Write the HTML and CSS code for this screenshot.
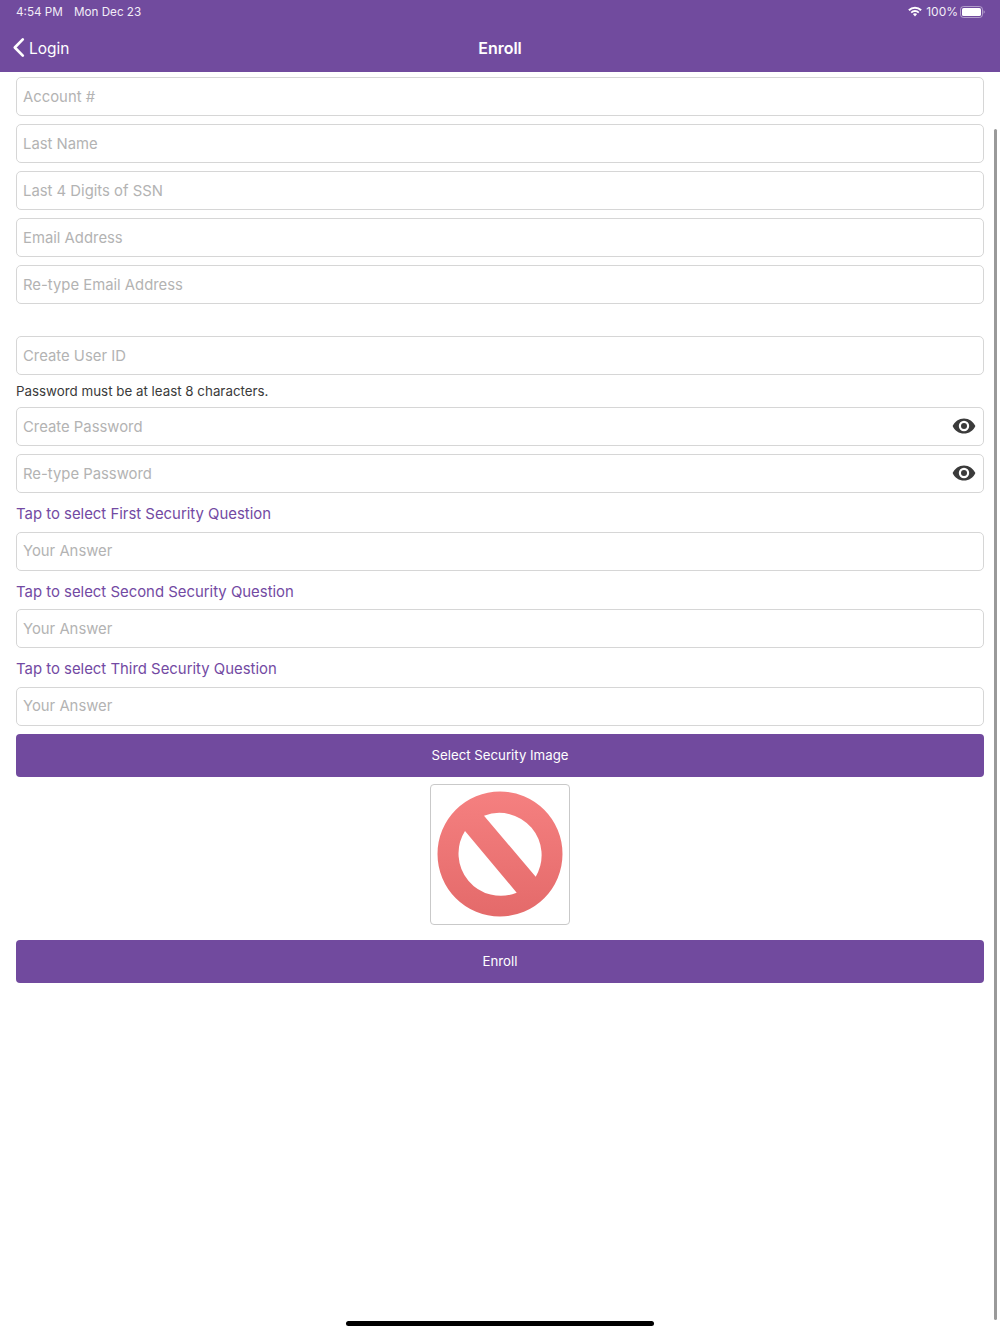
FILE: index.html
```html
<!DOCTYPE html>
<html lang="en">
<head>
<meta charset="utf-8">
<title>Enroll</title>
<link rel="stylesheet" href="styles.css">
</head>
<body>
<div class="screen">
  <header class="top">
    <div class="status">
      <div class="status-left"><span>4:54 PM</span><span>Mon Dec 23</span></div>
      <div class="status-right">
        <svg class="wifi" width="14" height="11" viewBox="0 0 14 11"><path d="M0.2 3.6A9.6 9.6 0 0 1 13.800 3.600L12.400 5A7.700 7.700 0 0 0 1.600 5Z" fill="#fff"/><path d="M2.600 5.900A6.300 6.300 0 0 1 11.400 5.900L10.200 7.200A4.600 4.600 0 0 0 3.800 7.200Z" fill="#fff"/><path d="M4.900 8.100A3.100 3.100 0 0 1 9.100 8.100L7 10.500Z" fill="#fff"/></svg>
        <span class="pct">100%</span>
        <svg class="battery" width="25" height="12" viewBox="0 0 25 12"><rect x="0.500" y="0.500" width="22" height="11" rx="3" fill="none" stroke="#fff" stroke-opacity="0.45"/><rect x="2" y="2" width="19" height="8" rx="1.600" fill="#fff"/><path d="M23.600 4.200a2 2 0 0 1 0 3.600Z" fill="#fff" fill-opacity="0.5"/></svg>
      </div>
    </div>
    <nav class="nav">
      <div class="back">
        <svg class="chevron" width="13" height="21" viewBox="0 0 13 21"><path d="M10.800 2.400 2.800 10.500l8 8.100" fill="none" stroke="#fff" stroke-width="2.700" stroke-linecap="round" stroke-linejoin="round"/></svg>
        <span>Login</span>
      </div>
      <div class="nav-title">Enroll</div>
    </nav>
  </header>
  <main class="form">
    <div class="group">
      <div class="field"><input placeholder="Account #"></div>
      <div class="field"><input placeholder="Last Name"></div>
      <div class="field"><input placeholder="Last 4 Digits of SSN"></div>
      <div class="field"><input placeholder="Email Address"></div>
      <div class="field"><input placeholder="Re-type Email Address"></div>
    </div>
    <div class="group second">
      <div class="field"><input placeholder="Create User ID"></div>
      <p class="note">Password must be at least 8 characters.</p>
      <div class="field"><input placeholder="Create Password">
        <svg class="eye" width="24" height="16" viewBox="0 0 24 16"><path fill-rule="evenodd" d="M12 0.400C17 0.400 21.200 3.400 23.400 8 21.200 12.600 17 15.600 12 15.600S2.800 12.600 0.600 8C2.800 3.400 7 0.400 12 0.400ZM12 2.800A5.200 5.200 0 1 0 12 13.200 5.200 5.200 0 1 0 12 2.800Z" fill="#3b3b3b"/><circle cx="12" cy="8" r="3" fill="#3b3b3b"/></svg>
      </div>
      <div class="field"><input placeholder="Re-type Password">
        <svg class="eye" width="24" height="16" viewBox="0 0 24 16"><path fill-rule="evenodd" d="M12 0.400C17 0.400 21.200 3.400 23.400 8 21.200 12.600 17 15.600 12 15.600S2.800 12.600 0.600 8C2.800 3.400 7 0.400 12 0.400ZM12 2.800A5.200 5.200 0 1 0 12 13.200 5.200 5.200 0 1 0 12 2.800Z" fill="#3b3b3b"/><circle cx="12" cy="8" r="3" fill="#3b3b3b"/></svg>
      </div>
      <div class="question">Tap to select First Security Question</div>
      <div class="field"><input placeholder="Your Answer"></div>
      <div class="question">Tap to select Second Security Question</div>
      <div class="field"><input placeholder="Your Answer"></div>
      <div class="question">Tap to select Third Security Question</div>
      <div class="field"><input placeholder="Your Answer"></div>
    </div>
    <button class="btn">Select Security Image</button>
    <div class="image-box">
      <svg width="126" height="126" viewBox="0 0 126 126">
        <defs><linearGradient id="red" x1="0" y1="0" x2="0" y2="1"><stop offset="0" stop-color="#f58080"/><stop offset="1" stop-color="#e46a6a"/></linearGradient></defs>
        <path fill-rule="evenodd" fill="url(#red)" d="M63 0.500A62.500 62.500 0 1 1 63 125.500A62.500 62.500 0 1 1 63 0.500ZM28 40A42.300 42.300 0 0 0 79.700 101.700L28 40ZM47 24.700 98.700 85.700A42.300 42.300 0 0 0 47 24.700Z"/>
      </svg>
    </div>
    <button class="btn enroll">Enroll</button>
  </main>
  <div class="scrollbar"></div>
  <div class="home"></div>
</div>
</body>
</html>
```
FILE: styles.css
```css
* { box-sizing: border-box; }
html, body { margin: 0; padding: 0; background: #fff; }
body { font-family: Inter, "Liberation Sans", sans-serif; }
.screen { position: relative; width: 1000px; height: 1334px; overflow: hidden; background: #fff; }
.top { height: 72px; background: #714b9e; color: #fff; }
.status { height: 24px; padding: 0 15px 1px 16px; display: flex; justify-content: space-between; align-items: center; font-size: 11.7px; color: #f2edf7; }
.status-left { display: flex; gap: 11px; }
.status-right { display: flex; align-items: center; gap: 4px; }
.pct { font-size: 12px; margin-right: -2px; }
.nav { position: relative; height: 48px; display: flex; align-items: center; justify-content: center; }
.back { position: absolute; left: 12px; top: 0; height: 48px; display: flex; align-items: center; gap: 4px; font-size: 15.5px; }
.chevron { margin-top: -1px; }
.nav-title { font-size: 16px; font-weight: 600; }
.form { padding: 5px 16px 0; }
.group { display: flex; flex-direction: column; }
.second { margin-top: 24px; }
.field { position: relative; height: 39px; margin-bottom: 8px; }
.field input { width: 100%; height: 100%; border: 1px solid #d6d6d6; border-radius: 5px; padding: 0 40px 0 6px; font: 14.850px Inter, "Liberation Sans", sans-serif; color: #333; background: #fff; outline: none; }
.field input::placeholder { color: #b3b3b3; opacity: 1; }
.eye { position: absolute; right: 8px; top: 11px; }
.note { margin: -5px 0 0; height: 29px; line-height: 22px; font-size: 13.350px; color: #3a3a3a; padding-top: 2px; }
.question { height: 30.600px; padding-top: 1px; line-height: 25px; font-size: 14.900px; color: #734aa3; }
.btn { display: block; width: 100%; height: 43px; border: 0; border-radius: 4px; background: #714a9e; color: #fff; font: 13.250px Inter, "Liberation Sans", sans-serif; padding: 0; }
.enroll { margin-top: 15px; }
.image-box { width: 140px; height: 141px; margin: 7px auto 0; border: 1px solid #c9c9c9; border-radius: 4px; display: flex; align-items: center; justify-content: center; }
.scrollbar { position: absolute; left: 994px; top: 129px; width: 3px; height: 1191px; background: #9a9a9a; border-radius: 2px; }
.home { position: absolute; left: 346px; top: 1321px; width: 308px; height: 5px; background: #000; border-radius: 3px; }
```
